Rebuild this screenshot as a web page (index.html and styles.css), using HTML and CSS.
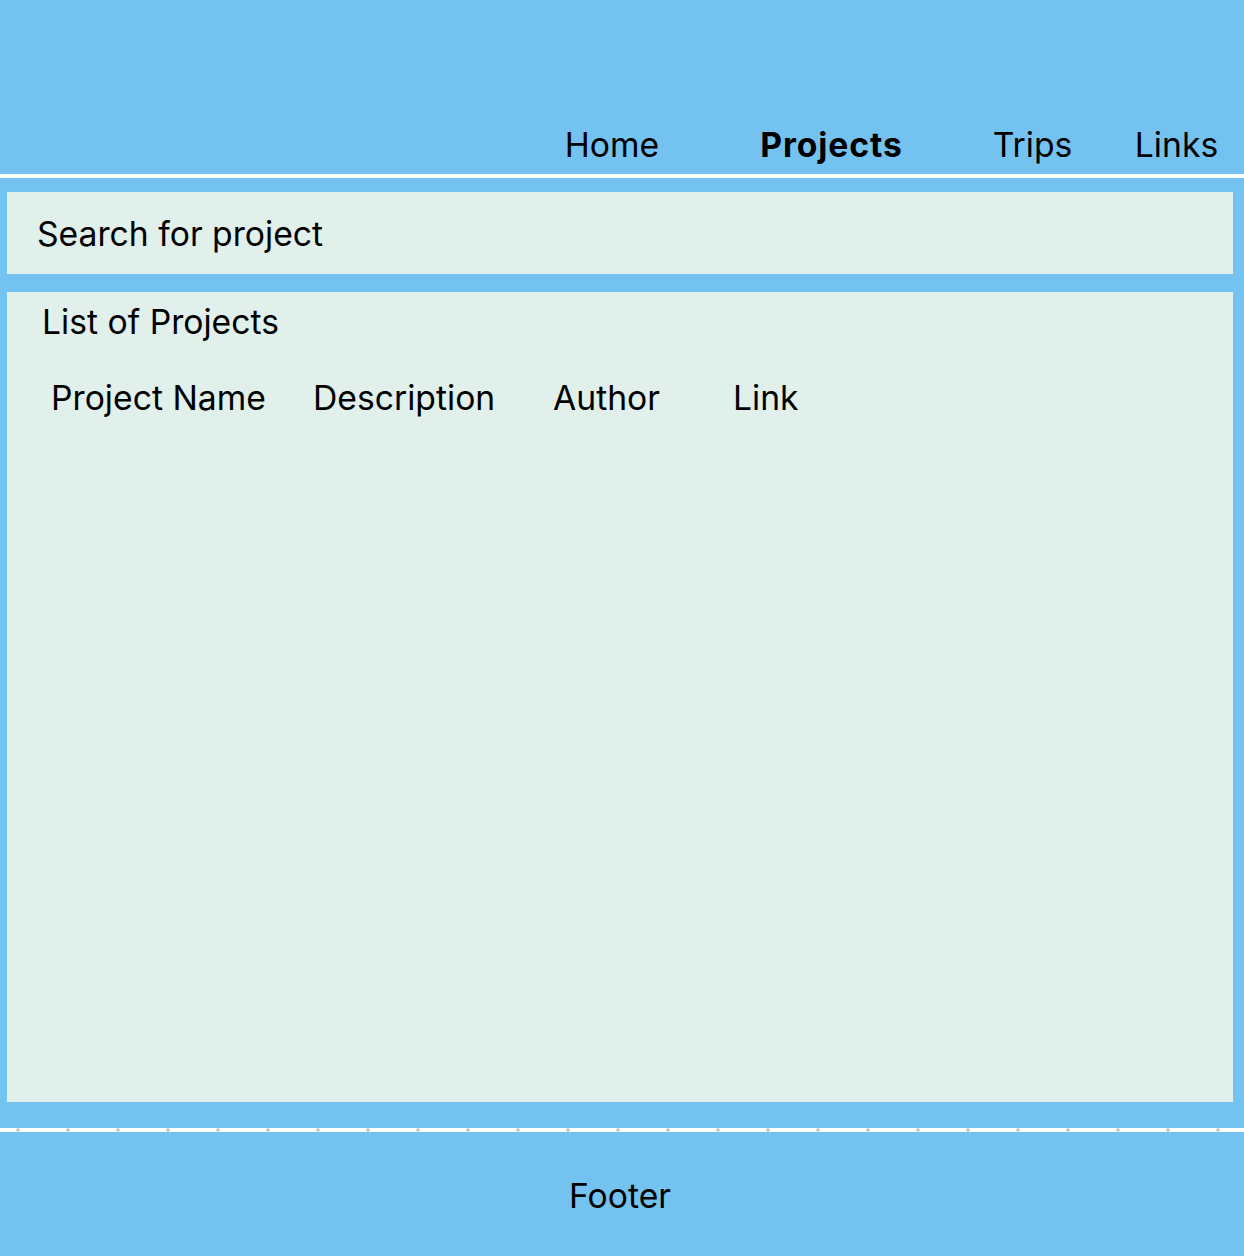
FILE: index.html
```html
<!DOCTYPE html>
<html lang="en">
<head>
<meta charset="utf-8">
<title>Projects</title>
<link rel="stylesheet" href="styles.css">
</head>
<body>
<header class="site-header">
  <nav class="nav">
    <a class="nav-item nav-home" href="#">Home</a>
    <a class="nav-item nav-projects active" href="#">Projects</a>
    <a class="nav-item nav-trips" href="#">Trips</a>
    <a class="nav-item nav-links" href="#">Links</a>
  </nav>
</header>
<div class="rule"></div>
<main class="main">
  <div class="search-box">Search for project</div>
  <section class="panel">
    <h2 class="panel-title">List of Projects</h2>
    <div class="table-head">
      <span class="col">Project Name</span>
      <span class="col">Description</span>
      <span class="col">Author</span>
      <span class="col">Link</span>
    </div>
  </section>
</main>
<div class="rule rule-dotted"></div>
<footer class="site-footer">Footer</footer>
</body>
</html>
```

FILE: styles.css
```css
html, body {
  margin: 0;
  padding: 0;
}
body {
  background: #74c2f0;
  font-family: Inter, "Noto Sans", sans-serif;
  font-size: 33.7px;
  line-height: 40px;
  color: #000;
  width: 1244px;
}
.site-header {
  height: 174px;
  display: flex;
  justify-content: flex-end;
  align-items: flex-end;
  box-sizing: border-box;
  padding-bottom: 9px;
}
.nav {
  display: flex;
}
.nav-item {
  color: #000;
  text-decoration: none;
  text-align: center;
}
.nav-home { width: 190px; }
.nav-projects { width: 249px; }
.nav-trips { width: 153px; }
.nav-links { width: 135px; }
.active {
  font-weight: 700;
  letter-spacing: 0.9px;
}
.rule {
  height: 4px;
  background: #ffffff;
}
.rule-dotted {
  background-color: #ffffff;
  background-image: radial-gradient(circle, #c4c4c4 0, #c4c4c4 1.3px, rgba(196,196,196,0) 2.2px);
  background-size: 50px 4px;
  background-position: -7px 0;
  background-repeat: repeat-x;
}
.main {
  padding: 14px 11px 26px 7px;
}
.search-box {
  height: 82px;
  background: #e1f0eb;
  display: flex;
  align-items: center;
  padding-left: 30px;
  padding-top: 2px;
  box-sizing: border-box;
}
.panel {
  margin-top: 18px;
  height: 810px;
  background: #e1f0eb;
  box-sizing: border-box;
  padding-top: 10px;
}
.panel-title {
  margin: 0;
  font-size: 33.7px;
  font-weight: 400;
  line-height: 40px;
  padding-left: 35px;
}
.table-head {
  display: grid;
  grid-template-columns: 262px 240px 180px auto;
  padding-left: 44px;
  margin-top: 36px;
}
.site-footer {
  height: 124px;
  display: flex;
  align-items: center;
  justify-content: center;
  box-sizing: border-box;
  padding-top: 4px;
  padding-right: 4px;
}
```
